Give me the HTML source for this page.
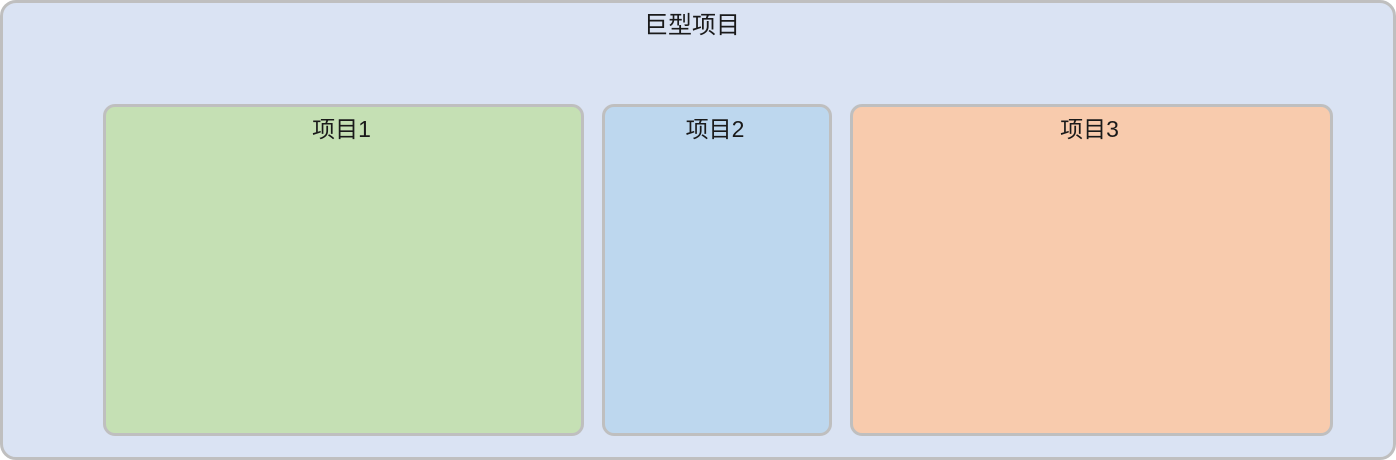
<!DOCTYPE html>
<html><head><meta charset="utf-8"><style>
body{margin:0;width:1396px;height:460px;background:#fff;position:relative;overflow:hidden;font-family:"Liberation Sans","Noto Sans CJK SC",sans-serif;color:#1a1a1a}
.b{position:absolute;box-sizing:border-box;border:3px solid #bfbfbf;text-align:center}
.o{left:0;top:0;width:1396px;height:460px;background:#dae3f3;border-radius:16px}
.t{position:absolute;left:0;width:1384px;top:10px;text-align:center;font-size:24px;line-height:32px}
.i{top:104px;height:332px;border-radius:12px;font-size:23px;padding-top:7px;padding-right:4px;line-height:30px}
</style></head><body>
<div class="b o"></div>
<div class="t">巨型项目</div>
<div class="b i" style="left:103px;width:481px;background:#c5e0b4">项目1</div>
<div class="b i" style="left:602px;width:230px;background:#bdd7ee">项目2</div>
<div class="b i" style="left:850px;width:483px;background:#f8cbad">项目3</div>
</body></html>
